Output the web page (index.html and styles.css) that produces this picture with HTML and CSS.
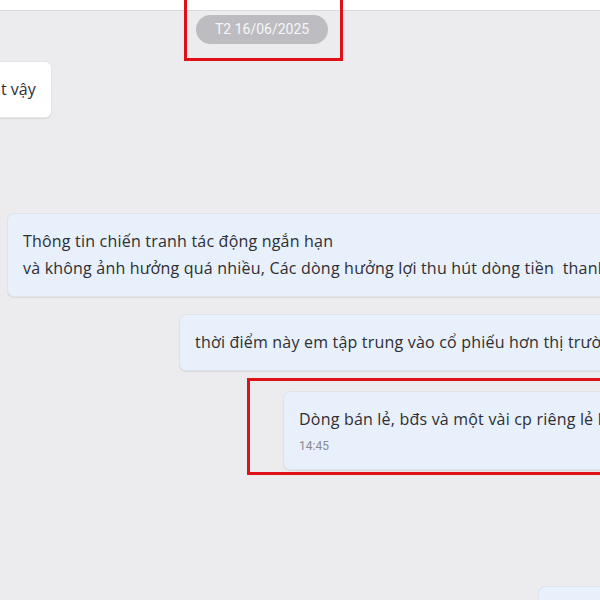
FILE: index.html
```html
<!DOCTYPE html>
<html lang="vi">
<head>
<meta charset="utf-8">
<title>Chat</title>
<link rel="stylesheet" href="styles.css">
</head>
<body>
<div class="screen">
  <div class="topbar"></div>
  <div class="chat">
    <div class="date-row"><span class="date-pill">T2 16/06/2025</span></div>
    <div class="bubble incoming"><span class="text">t vậy</span></div>
    <div class="bubble outgoing b1">
      <div class="text">Thông tin chiến tranh tác động ngắn hạn</div>
      <div class="text">và không ảnh hưởng quá nhiều, Các dòng hưởng lợi thu hút dòng tiền&nbsp; thanh khoản tốt hơn</div>
    </div>
    <div class="bubble outgoing b2">
      <div class="text">thời điểm này em tập trung vào cổ phiếu hơn thị trường chung</div>
    </div>
    <div class="bubble outgoing b3">
      <div class="text">Dòng bán lẻ, bđs và một vài cp riêng lẻ khác</div>
      <div class="time">14:45</div>
    </div>
    <div class="bubble outgoing b4">
      <div class="text">Vâng ạ</div>
    </div>
  </div>
  <div class="mark mark-date"></div>
  <div class="mark mark-msg"></div>
</div>
</body>
</html>
```

FILE: styles.css
```css
html, body {
  margin: 0;
  padding: 0;
}
body {
  width: 600px;
  height: 600px;
  overflow: hidden;
  background: #ececef;
  font-family: "Open Sans", "Noto Sans", "Liberation Sans", sans-serif;
  color: #2e2e33;
}
.screen {
  position: relative;
  width: 600px;
  height: 600px;
  overflow: hidden;
}
.topbar {
  height: 10px;
  background: #ffffff;
  border-bottom: 1px solid #d9d9de;
}
.chat {
  display: flex;
  flex-direction: column;
  align-items: flex-start;
  padding-top: 4px;
}
.date-row {
  margin-left: 196px;
  display: flex;
}
.date-pill {
  display: inline-block;
  height: 29px;
  line-height: 29px;
  padding: 0 19px;
  border-radius: 15px;
  background: #bdbdc1;
  color: #f6f6f8;
  font-family: Roboto, "Noto Sans", sans-serif;
  font-size: 14px;
  white-space: nowrap;
}
.bubble {
  white-space: nowrap;
  border-radius: 7px;
  font-size: 16px;
  line-height: 27px;
  letter-spacing: 0.2px;
  box-shadow: 0 1px 1px rgba(0, 0, 0, 0.08);
  border: 1px solid #dfe3ea;
}
.incoming {
  margin-top: 17px;
  margin-left: -40px;
  background: #ffffff;
  border-color: #e6e6ea;
  padding: 14px 15px 14px 40px;
  letter-spacing: 0;
}
.outgoing {
  background: #e7f0fb;
}
.b1 {
  margin-top: 95px;
  margin-left: 7px;
  padding: 14px 16px 14px 15px;
}
.b2 {
  margin-top: 17px;
  margin-left: 179px;
  padding: 14px 16px 14px 15px;
}
.b3 {
  margin-top: 20px;
  margin-left: 283px;
  padding: 14px 16px 10px 15px;
}
.time {
  font-family: Roboto, "Noto Sans", sans-serif;
  font-size: 12px;
  line-height: 26px;
  letter-spacing: 0;
  color: #8a8a90;
}
.b4 {
  margin-top: 116px;
  margin-left: 538px;
  padding: 14px 16px;
}
.mark {
  position: absolute;
  border: 3px solid #e01019;
  box-sizing: border-box;
}
.mark-date {
  left: 184px;
  top: -3px;
  width: 159px;
  height: 64px;
}
.mark-msg {
  left: 247px;
  top: 378px;
  width: 400px;
  height: 97px;
}
```
